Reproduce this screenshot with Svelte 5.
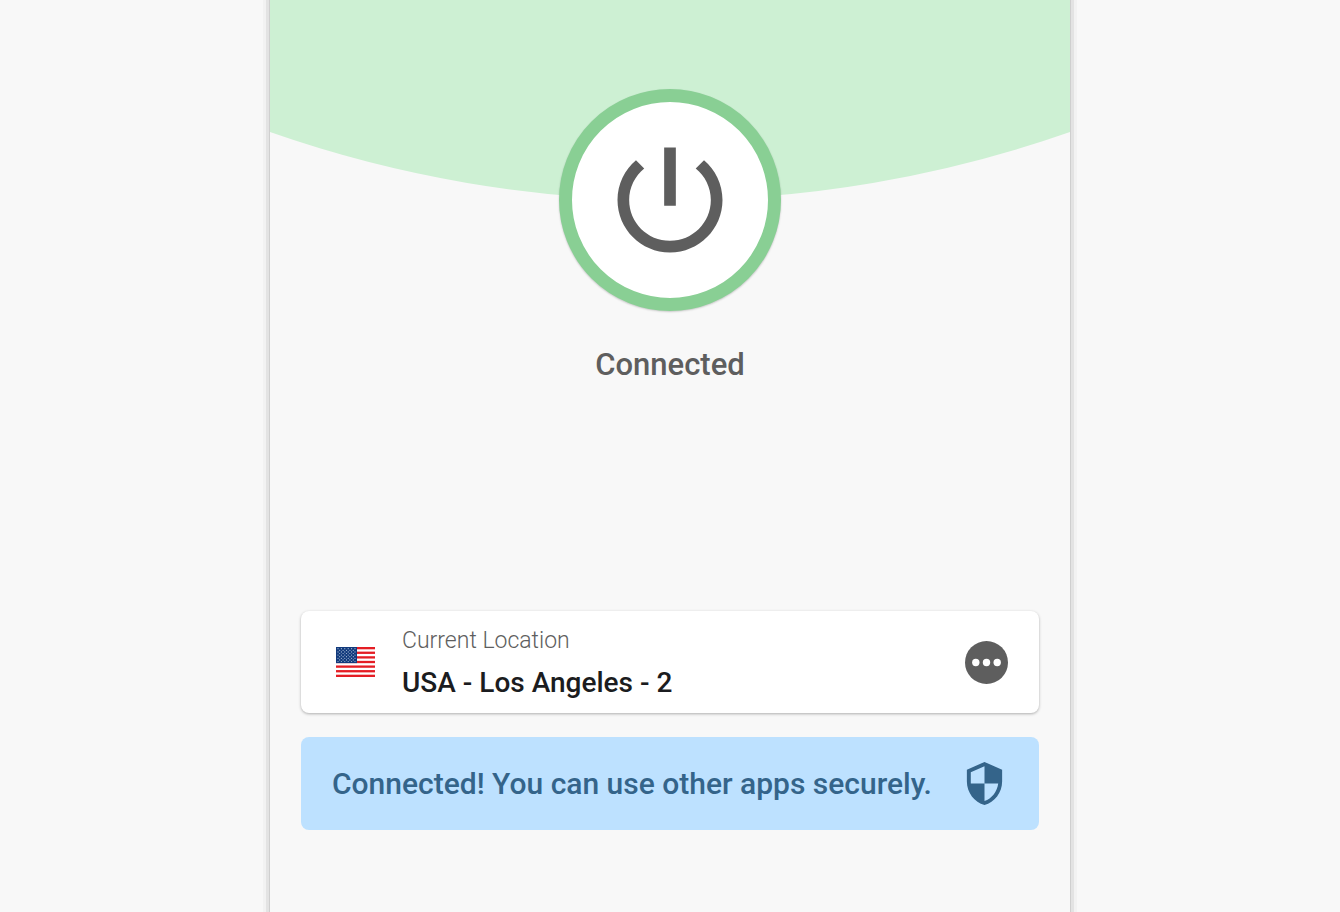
<script lang="ts">
  let connected = $state(true);
  let location = $state('USA - Los Angeles - 2');

  const stripes = [0, 2, 4, 6, 8, 10, 12];

  // nine rows of stars, alternating six and five
  const stars = Array.from({ length: 9 }, (_, row) =>
    Array.from({ length: row % 2 ? 5 : 6 }, (_, col) => ({
      x: 2 + col * 3.4 + (row % 2 ? 1.7 : 0),
      y: 1.7 + row * 1.6
    }))
  ).flat();

  function toggle() {
    connected = !connected;
  }
</script>

<main class="panel">
  <section class="hero">
    <svg class="hero-arc" class:off={!connected} viewBox="0 0 800 200" preserveAspectRatio="none" aria-hidden="true">
      <path d="M0 0H800V132A1210 1210 0 0 1 0 132Z" />
    </svg>
    <button class="power" class:off={!connected} aria-label="Toggle connection" aria-pressed={connected} onclick={toggle}>
      <svg class="power-icon" viewBox="0 0 24 24" aria-hidden="true">
        <path d="M13 3h-2v10h2V3zm4.83 2.17l-1.42 1.42C17.99 7.86 19 9.81 19 12c0 3.87-3.13 7-7 7s-7-3.13-7-7c0-2.19 1.01-4.14 2.58-5.42L6.17 5.17C4.23 6.82 3 9.26 3 12c0 4.97 4.03 9 9 9s9-4.03 9-9c0-2.74-1.23-5.18-3.17-6.83z" />
      </svg>
    </button>
    <p class="status" role="status">{connected ? 'Connected' : 'Not connected'}</p>
  </section>

  <section class="cards">
    <div class="location">
      <svg class="flag" viewBox="0 0 39 30" role="img" aria-label="USA flag">
        <rect width="39" height="30" fill="#fff" />
        {#each stripes as stripe}
          <rect y={(stripe * 30) / 13} width="39" height={30 / 13} fill="#e41d24" />
        {/each}
        <rect width="21" height="16.1" fill="#123a7d" />
        {#each stars as star}
          <circle cx={star.x} cy={star.y} r="0.6" fill="#a9bfd6" />
        {/each}
      </svg>
      <div class="location-text">
        <span class="location-label">Current Location</span>
        <span class="location-name">{location}</span>
      </div>
      <button class="more" aria-label="Choose location">
        <svg viewBox="0 0 43 43" aria-hidden="true">
          <circle cx="21.5" cy="21.5" r="21.5" fill="#5e5e5e" />
          <circle cx="10.8" cy="21.5" r="3.7" fill="#fff" />
          <circle cx="21.5" cy="21.5" r="3.7" fill="#fff" />
          <circle cx="32.2" cy="21.5" r="3.7" fill="#fff" />
        </svg>
      </button>
    </div>

    {#if connected}
      <div class="notice">
        <p class="notice-text">Connected! You can use other apps securely.</p>
        <svg class="shield" viewBox="0 0 24 24" aria-hidden="true">
          <path d="M12 1L3 5v6c0 5.55 3.84 10.74 9 12 5.16-1.26 9-6.45 9-12V5l-9-4zm0 10.99h7c-.53 4.12-3.28 7.79-7 8.94V12H5V6.3l7-3.11v8.8z" />
        </svg>
      </div>
    {/if}
  </section>
</main>

<style>
  :global(body) {
    margin: 0;
    background: #f8f8f8;
    font-family: Roboto, sans-serif;
  }

  .panel {
    box-sizing: border-box;
    max-width: 800px;
    min-height: 100vh;
    margin: 0 auto;
    background: #f8f8f8;
    box-shadow: 0 0 0 1px #cfcfcf, 0 0 0 4px #e3e3e3, 0 0 0 7px #f2f2f2;
  }

  .hero {
    display: grid;
    grid-template-columns: 100%;
    justify-items: center;
  }

  .hero-arc {
    grid-area: 1 / 1;
    width: 100%;
    height: 200px;
    fill: #cdf0d3;
  }

  .hero-arc.off {
    fill: #e4e4e4;
  }

  .power {
    grid-area: 1 / 1;
    box-sizing: border-box;
    display: flex;
    align-items: center;
    justify-content: center;
    width: 222px;
    height: 222px;
    margin-top: 89px;
    padding: 0;
    border: 13px solid #89cf94;
    border-radius: 50%;
    background: #fff;
    box-shadow: 0 1px 2px rgba(0, 0, 0, 0.2);
    cursor: pointer;
  }

  .power.off {
    border-color: #b5b5b5;
  }

  .power-icon {
    width: 140px;
    height: 140px;
    flex-shrink: 0;
    fill: #5e5e5e;
  }

  .status {
    margin: 34px 0 0;
    color: #5e5e5e;
    font-size: 31px;
    font-weight: 500;
    line-height: 40px;
  }

  .cards {
    display: flex;
    flex-direction: column;
    gap: 24px;
    padding: 226px 31px 32px;
  }

  .location,
  .notice {
    box-sizing: border-box;
    display: flex;
    align-items: center;
    border-radius: 8px;
  }

  .location {
    min-height: 102px;
    padding: 0 31px 0 35px;
    background: #fff;
    box-shadow: 0 1px 3px rgba(0, 0, 0, 0.3);
  }

  .flag {
    width: 39px;
    height: 30px;
    margin-right: 27px;
    flex-shrink: 0;
  }

  .location-text {
    display: flex;
    flex: 1;
    flex-direction: column;
    min-width: 0;
  }

  .location-label {
    color: #5e5e5e;
    font-size: 23px;
    font-weight: 300;
    line-height: 42px;
  }

  .location-name {
    color: #1b1c20;
    font-size: 28px;
    font-weight: 500;
    line-height: 42px;
  }

  .more {
    width: 43px;
    height: 43px;
    padding: 0;
    border: 0;
    border-radius: 50%;
    background: none;
    cursor: pointer;
  }

  .more svg {
    display: block;
  }

  .notice {
    justify-content: space-between;
    min-height: 93px;
    padding: 0 31px;
    background: #bde1ff;
    color: #34648a;
  }

  .notice-text {
    margin: 0;
    font-size: 30px;
    font-weight: 500;
    line-height: 40px;
  }

  .shield {
    width: 47px;
    height: 47px;
    flex-shrink: 0;
    fill: currentColor;
  }
</style>
